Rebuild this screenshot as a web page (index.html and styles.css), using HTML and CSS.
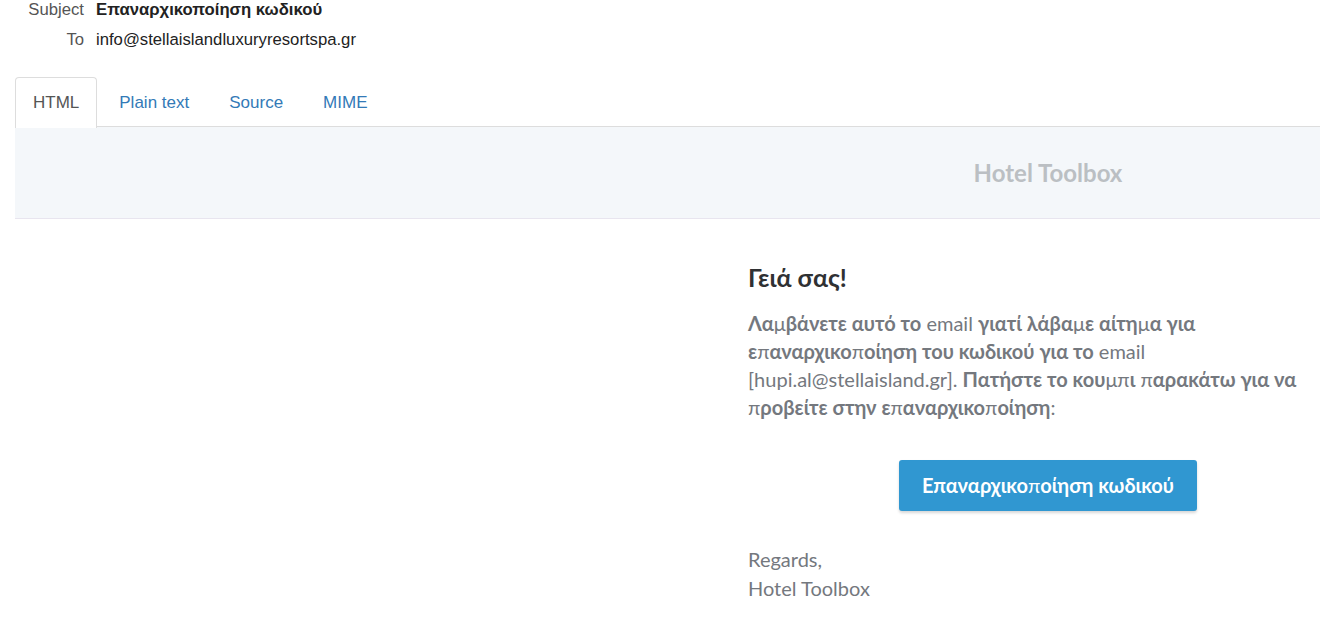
FILE: index.html
```html
<!DOCTYPE html>
<html>
<head>
<meta charset="utf-8">
<link rel="stylesheet" href="styles.css">
</head>
<body>
<div class="meta">
  <div class="row"><span class="label">Subject</span><span class="val bold">Επαναρχικοποίηση κωδικού</span></div>
  <div class="row"><span class="label">To</span><span class="val">info@stellaislandluxuryresortspa.gr</span></div>
</div>
<div class="tabs">
  <div class="tab active">HTML</div>
  <div class="tab">Plain text</div>
  <div class="tab">Source</div>
  <div class="tab">MIME</div>
</div>
<div class="frame">
  <div class="mailhead"><div class="col"><span class="brand">Hotel Toolbox</span></div></div>
  <div class="mailbody">
    <div class="col content">
      <h1 class="hello">Γειά σας!</h1>
      <p class="para"><b>Λα</b>μ<b>βάνετε αυτό το</b> email <b>γιατί λάβα</b>μ<b>ε αίτη</b>μ<b>α για ε</b>π<b>αναρχικο</b>π<b>οίηση του κωδικού για το</b> email [hupi.al@stellaisland.gr]. <b>Πατήστε το κου</b>μπ<b>ι</b> π<b>αρακάτω για να</b> π<b>ροβείτε στην ε</b>π<b>αναρχικο</b>π<b>οίηση</b>:</p>
      <div class="btnwrap"><span class="btn">Επαναρχικο<span class="thin">π</span>οίηση κωδικού</span></div>
      <p class="para regards">Regards,<br>Hotel Toolbox</p>
    </div>
  </div>
</div>
</body>
</html>
```
FILE: styles.css
```css
html, body { margin: 0; padding: 0; background: #fff; }
body { font-family: "Liberation Sans", Arial, sans-serif; color: #333; width: 1320px; height: 635px; overflow: hidden; }
.meta { padding-top: 0; }
.row { display: flex; height: 20px; align-items: center; font-size: 16.7px; }
.row + .row { margin-top: 10px; }
.label { width: 84px; text-align: right; color: #555; }
.val { margin-left: 12px; color: #222; }
.bold { font-weight: bold; }
.tabs { display: flex; margin: 27px 0 0 15px; border-bottom: 1px solid #ddd; height: 49px; }
.tab { padding: 0 19px; font-size: 17px; color: #337ab7; line-height: 49px; border: 1px solid transparent; border-bottom: none; border-radius: 4px 4px 0 0; }
.tab.active { color: #555; background: #fff; border-color: #ddd; margin-bottom: -1px; margin-right: 2px; padding: 0 17px 0 17px; height: 50px; }
.frame { margin-left: 15px; font-family: "Lato", "Noto Sans", sans-serif; }
.mailhead { background: #f4f7fa; border-bottom: 1px solid #e8e5ef; height: 91px; display: flex; align-items: center; padding-left: 733px; }
.col { width: 600px; flex-shrink: 0; }
.mailhead .col { text-align: center; }
.brand { font-size: 24px; font-weight: bold; color: #bbbfc3; }
.mailbody { padding-left: 733px; }
.content { padding-top: 43px; }
.hello { margin: 0 0 17px; font-size: 25px; font-weight: bold; color: #2f3133; line-height: 30px; }
.para { margin: 0; font-size: 20px; line-height: 28px; color: #74787e; width: 570px; }
.para b { font-weight: bold; }
.btnwrap { display: flex; justify-content: center; margin: 39px 0 34px; }
.btn { display: inline-block; width: 298px; height: 51px; line-height: 51px; text-align: center; background: #3097d1; color: #fff; font-size: 20px; font-weight: bold; border-radius: 3px; box-shadow: 0 2px 3px rgba(0,0,0,0.16); }
.thin { font-weight: normal; }
.regards { line-height: 29px; }
```
